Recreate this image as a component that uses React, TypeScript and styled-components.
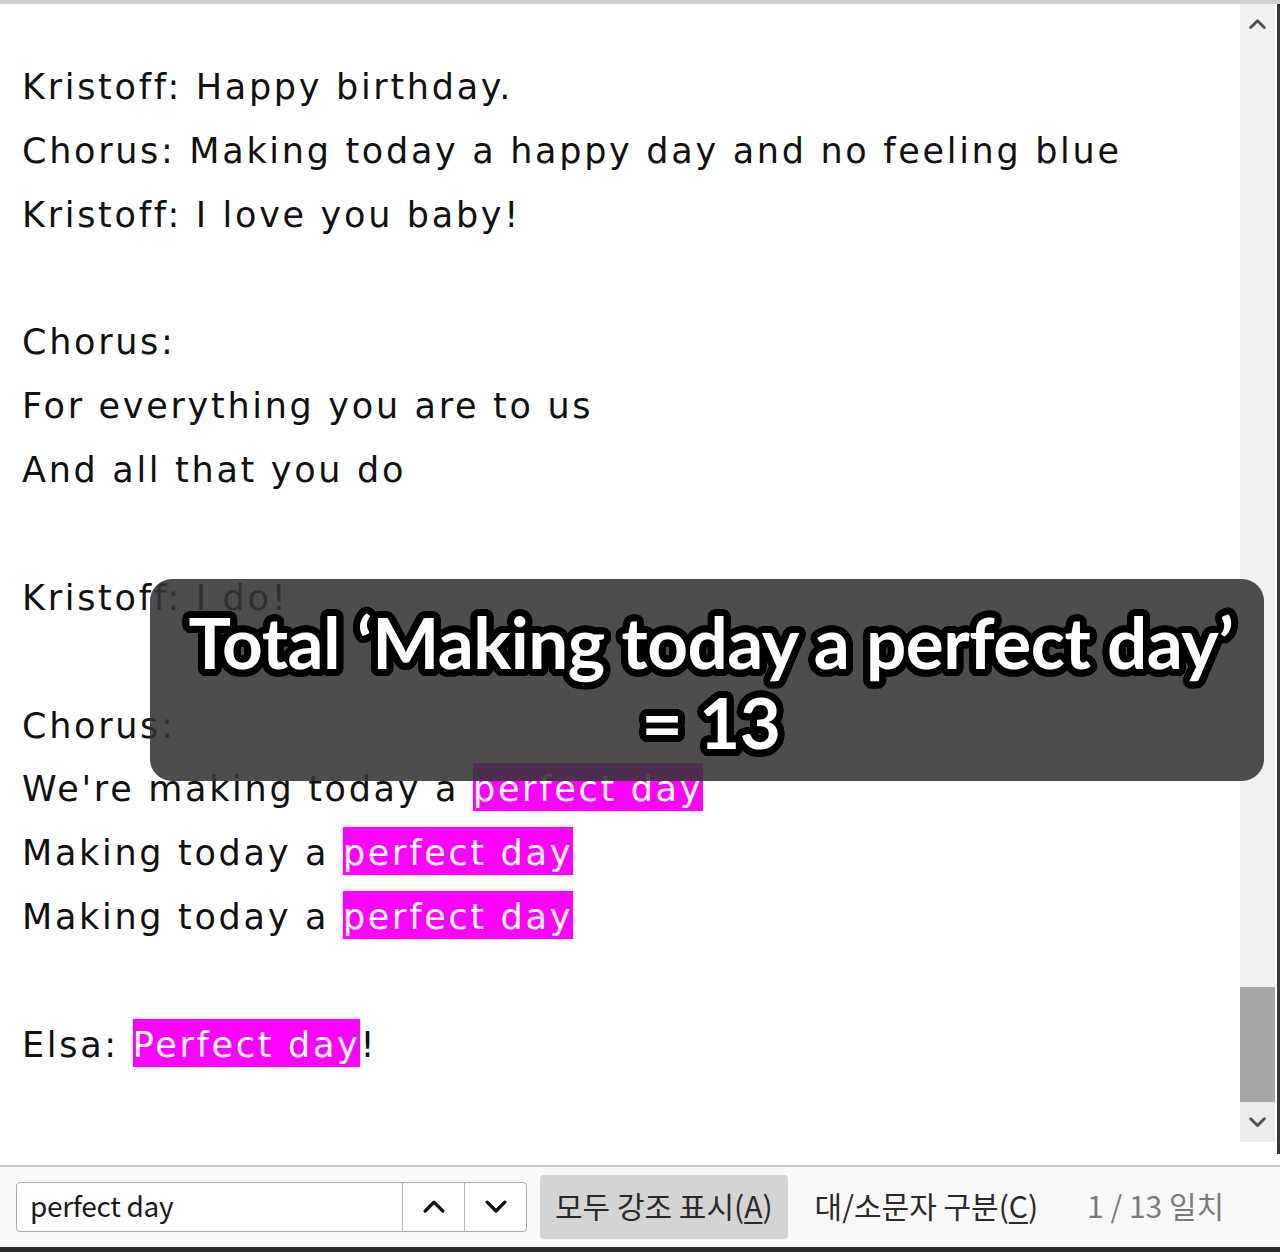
import React from 'react';
import styled, { createGlobalStyle } from 'styled-components';

const GlobalStyle = createGlobalStyle`
  html, body {
    margin: 0;
    padding: 0;
    background: #ffffff;
  }
  * {
    box-sizing: border-box;
  }
`;

// round black outline for the caption, built from stacked shadows
const ring = (r: number, steps: number) =>
  Array.from({ length: steps }, (_, i) => {
    const a = (i / steps) * Math.PI * 2;
    return `${(Math.cos(a) * r).toFixed(1)}px ${(Math.sin(a) * r).toFixed(1)}px 0 #000`;
  }).join(', ');

const OUTLINE = [ring(7, 32), ring(4.5, 20), ring(2, 12)].join(', ');

type Segment = { text: string; hit?: boolean };
type Line = Segment[] | null;

const LYRICS: Line[] = [
  [{ text: 'Kristoff: Happy birthday.' }],
  [{ text: 'Chorus: Making today a happy day and no feeling blue' }],
  [{ text: 'Kristoff: I love you baby!' }],
  null,
  [{ text: 'Chorus:' }],
  [{ text: 'For everything you are to us' }],
  [{ text: 'And all that you do' }],
  null,
  [{ text: 'Kristoff: I do!' }],
  null,
  [{ text: 'Chorus:' }],
  [{ text: "We're making today a " }, { text: 'perfect day', hit: true }],
  [{ text: 'Making today a ' }, { text: 'perfect day', hit: true }],
  [{ text: 'Making today a ' }, { text: 'perfect day', hit: true }],
  null,
  [{ text: 'Elsa: ' }, { text: 'Perfect day', hit: true }, { text: '!' }],
];

function ChevronUp({ size = 20, color = '#111', weight = 3 }) {
  return (
    <svg width={size} height={size * 0.6} viewBox="0 0 20 12" fill="none">
      <path d="M2 10 L10 2 L18 10" stroke={color} strokeWidth={weight} strokeLinecap="round" strokeLinejoin="round" />
    </svg>
  );
}

function ChevronDown({ size = 20, color = '#111', weight = 3 }) {
  return (
    <svg width={size} height={size * 0.6} viewBox="0 0 20 12" fill="none">
      <path d="M2 2 L10 10 L18 2" stroke={color} strokeWidth={weight} strokeLinecap="round" strokeLinejoin="round" />
    </svg>
  );
}

function App() {
  return (
    <>
      <GlobalStyle />
      <Window>
        <Viewer>
          <TextPane>
            {LYRICS.map((line, i) => (
              <LyricLine key={i}>
                {line
                  ? line.map((seg, j) =>
                      seg.hit ? <Hit key={j}>{seg.text}</Hit> : <span key={j}>{seg.text}</span>
                    )
                  : '\u00a0'}
              </LyricLine>
            ))}
          </TextPane>
          <ScrollTrack>
            <ScrollArrow>
              <ChevronUp size={17} color="#505050" weight={3.4} />
            </ScrollArrow>
            <ScrollSpace />
            <ScrollThumb />
            <ScrollArrow $shaded>
              <ChevronDown size={17} color="#505050" weight={3.4} />
            </ScrollArrow>
          </ScrollTrack>
          <EdgeLine />
          <Caption>
            <CaptionLine>Total ‘Making today a perfect day’</CaptionLine>
            <CaptionLine>= 13</CaptionLine>
          </Caption>
        </Viewer>
        <FindBar>
          <SearchBox>
            <SearchInput>perfect day</SearchInput>
            <StepButton>
              <ChevronUp size={22} />
            </StepButton>
            <StepButton>
              <ChevronDown size={22} />
            </StepButton>
          </SearchBox>
          <ToggleButton $active>
            모두 강조 표시(<u>A</u>)
          </ToggleButton>
          <ToggleButton>
            대/소문자 구분(<u>C</u>)
          </ToggleButton>
          <MatchCount>1 / 13 일치</MatchCount>
        </FindBar>
      </Window>
    </>
  );
}

const Window = styled.div`
  width: 1280px;
  height: 1252px;
  display: flex;
  flex-direction: column;
  border-top: 4px solid #cfcfcf;
  overflow: hidden;
  background: #ffffff;
`;

const Viewer = styled.div`
  position: relative;
  flex: 1;
  display: flex;
  min-height: 0;
`;

const TextPane = styled.div`
  flex: 1;
  padding: 52px 0 0 22px;
  font-family: 'DejaVu Sans', Verdana, sans-serif;
  font-size: 35px;
  letter-spacing: 2.7px;
  color: #111111;
`;

const LyricLine = styled.div`
  height: 63.87px;
  line-height: 63.87px;
  white-space: pre;
`;

const Hit = styled.span`
  background: #ff00ff;
  color: #ffffff;
  padding: 6px 0 2px;
`;

const ScrollTrack = styled.div`
  width: 35px;
  margin-right: 2px;
  margin-bottom: 23px;
  display: flex;
  flex-direction: column;
  background: #f0f0f0;
`;

const ScrollArrow = styled.div<{ $shaded?: boolean }>`
  height: 40px;
  display: flex;
  align-items: center;
  justify-content: center;
  background: ${p => (p.$shaded ? '#ebebeb' : '#f0f0f0')};
`;

const ScrollSpace = styled.div`
  flex: 1;
`;

const ScrollThumb = styled.div`
  height: 115px;
  background: #a6a6a6;
`;

const EdgeLine = styled.div`
  width: 3px;
  margin-bottom: 11px;
  background: #383838;
`;

const Caption = styled.div`
  position: absolute;
  left: 150px;
  top: 575px;
  width: 1114px;
  height: 202px;
  border-radius: 22px;
  background: rgba(52, 52, 52, 0.88);
  display: flex;
  flex-direction: column;
  align-items: center;
  justify-content: center;
  padding: 4px 0 0 8px;
`;

const CaptionLine = styled.div`
  font-family: Lato, 'Noto Sans', sans-serif;
  font-weight: 700;
  font-size: 71px;
  line-height: 80px;
  letter-spacing: -0.5px;
  color: #ffffff;
  text-shadow: ${OUTLINE};
  white-space: pre;
`;

const FindBar = styled.div`
  height: 87px;
  flex-shrink: 0;
  display: flex;
  align-items: center;
  padding: 0 0 0 16px;
  background: #f8f8f8;
  border-top: 2px solid #c4c4c4;
  border-bottom: 5px solid #2e2e2e;
  font-family: 'Noto Sans CJK KR', 'Noto Sans', sans-serif;
  font-size: 30px;
`;

const SearchBox = styled.div`
  width: 511px;
  height: 50px;
  display: flex;
  background: #ffffff;
  border: 1.5px solid #a9a9a9;
  border-radius: 4px;
  overflow: hidden;
`;

const SearchInput = styled.div`
  flex: 1;
  display: flex;
  align-items: center;
  padding: 0 0 4px 13px;
  font-size: 28px;
  color: #1a1a1a;
  letter-spacing: -0.3px;
`;

const StepButton = styled.div`
  width: 62px;
  display: flex;
  align-items: center;
  justify-content: center;
  border-left: 1.5px solid #b4b4b4;
`;

const ToggleButton = styled.div<{ $active?: boolean }>`
  height: 64px;
  margin-left: ${p => (p.$active ? '13px' : '12px')};
  padding: 0 15px 4px;
  display: flex;
  align-items: center;
  border-radius: 4px;
  background: ${p => (p.$active ? '#d4d4d4' : 'transparent')};
  color: #2a2a2a;

  u {
    text-underline-offset: 4px;
    text-decoration-thickness: 2px;
  }
`;

const MatchCount = styled.div`
  margin-left: 34px;
  padding-bottom: 4px;
  color: #7a7a7a;
`;

export default App;
